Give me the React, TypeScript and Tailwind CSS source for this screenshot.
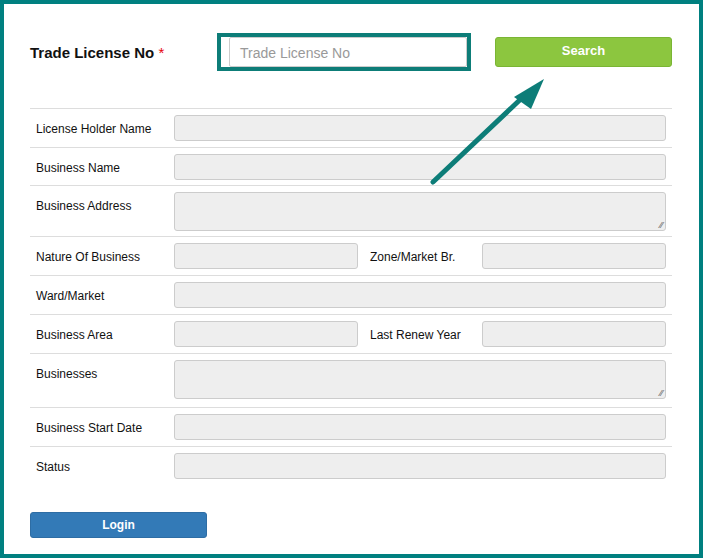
import React from "react";

const inp = "h-[26px] bg-[#eeeeee] border border-[#cccccc] rounded-[3px]";

function Row({ label, h = 39, ta = false, children }: { label: string; h?: number; ta?: boolean; children?: React.ReactNode }) {
  return (
    <div className="flex border-t border-[#dddddd] pt-[6px]" style={{ height: h }}>
      <div className="w-[144px] pl-[6px] pt-[5px] text-[12px] text-[#111]">{label}</div>
      {children ?? (
        <div className={`w-[492px] ${ta ? "h-[39px] relative" : ""} bg-[#eeeeee] border border-[#cccccc] rounded-[3px] ${ta ? "" : "h-[26px]"}`}>
          {ta && <span className="absolute right-[2px] bottom-[0px] text-[9px] text-[#555] leading-none">⁄⁄</span>}
        </div>
      )}
    </div>
  );
}

function Split({ a, b }: { a: string; b: string }) {
  return (
    <Row label={a}>
      <div className="flex">
        <div className={`${inp} w-[184px]`} />
        <div className="w-[124px] pl-[12px] pt-[5px] text-[12px] text-[#111]">{b}</div>
        <div className={`${inp} w-[184px]`} />
      </div>
    </Row>
  );
}

export default function App() {
  return (
    <div className="w-[703px] h-[558px] border-4 border-[#008080] bg-white relative" style={{ fontFamily: "Arial, 'Liberation Sans', sans-serif" }}>
      <div className="pl-[26px] pr-[27px] pt-[29px]">
        <div className="flex items-start h-[75px]">
          <div className="w-[187px] pt-[9px] text-[15px] font-bold text-[#111]">Trade License No <span className="text-red-600 font-normal">*</span></div>
          <div className="w-[254px] h-[38px] border-4 border-[#0d7d78] pl-[8px] flex items-start">
            <div className="w-[241px] h-[30px] border border-[#cccccc] rounded-[2px] bg-white pl-[10px] pt-[5px] text-[14px] text-[#999]">Trade License No</div>
          </div>
          <div className="ml-[24px] mt-[4px] w-[177px] h-[30px] bg-[#8cc63f] border border-[#7ab534] rounded-[3px] text-white text-[13px] font-bold flex justify-center pt-[3px]">Search</div>
        </div>
        <div className="w-[642px]">
          <Row label="License Holder Name" />
          <Row label="Business Name" h={38} />
          <Row label="Business Address" h={51} ta />
          <Split a="Nature Of Business" b="Zone/Market Br." />
          <Row label="Ward/Market" />
          <Split a="Business Area" b="Last Renew Year" />
          <Row label="Businesses" h={54} ta />
          <Row label="Business Start Date" />
          <Row label="Status" h={26 + 40} />
        </div>
        <div className="w-[177px] h-[26px] bg-[#337ab7] border border-[#2e6da4] rounded-[3px] text-white text-[12px] font-bold flex items-center justify-center">Login</div>
      </div>
      <svg className="absolute left-0 top-0" width="703" height="558" viewBox="0 0 703 558">
        <line x1="429" y1="178" x2="520" y2="92" stroke="#0d7d78" strokeWidth="5" strokeLinecap="round" />
        <polygon points="536,71 506,89 523,101" fill="#0d7d78" transform="translate(4,4)" />
      </svg>
    </div>
  );
}
